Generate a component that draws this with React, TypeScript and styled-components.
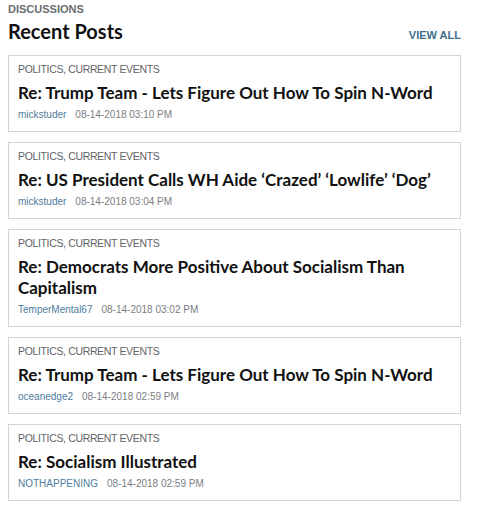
import React from "react";
import styled, { createGlobalStyle } from "styled-components";

const Global = createGlobalStyle`
  html, body { margin: 0; padding: 0; background: #fff; }
  body { font-family: Lato, "Liberation Sans", Arial, sans-serif; color: #111; }
`;

const Page = styled.div`
  width: 480px;
  padding: 2px 19px 0 8px;
  box-sizing: border-box;
`;

const Eyebrow = styled.div`
  font-family: "Liberation Sans", Arial, sans-serif;
  font-size: 11px;
  font-weight: 700;
  color: #6a6e72;
  line-height: 14px;
`;

const HeaderRow = styled.div`
  display: flex;
  align-items: baseline;
  justify-content: space-between;
  margin-top: 3px;
  margin-bottom: 12px;
`;

const Heading = styled.h2`
  margin: 0;
  font-size: 20px;
  font-weight: 700;
  line-height: 24px;
  color: #111;
`;

const ViewAll = styled.a`
  font-family: "Liberation Sans", Arial, sans-serif;
  font-size: 11px;
  font-weight: 700;
  color: #3d6f8c;
  text-decoration: none;
`;

const List = styled.div`
  display: flex;
  flex-direction: column;
  gap: 10px;
`;

const Card = styled.div`
  border: 1px solid #d4d4d4;
  padding: 6px 9px 9px;
  display: flex;
  flex-direction: column;
`;

const Category = styled.div`
  font-family: "Liberation Sans", Arial, sans-serif;
  font-size: 10.5px;
  color: #5f6368;
  line-height: 14px;
  letter-spacing: -0.35px;
`;

const Title = styled.div`
  font-size: 17px;
  font-weight: 700;
  line-height: 21px;
  color: #111;
  margin-top: 6px;
`;

const Meta = styled.div`
  display: flex;
  gap: 9px;
  font-family: "Liberation Sans", Arial, sans-serif;
  font-size: 10px;
  line-height: 14px;
  margin-top: 5px;
`;

const Author = styled.span`
  color: #4f7c9c;
`;

const Stamp = styled.span`
  color: #7a7e82;
`;

const posts = [
  { title: "Re: Trump Team - Lets Figure Out How To Spin N-Word", author: "mickstuder", date: "08-14-2018 03:10 PM" },
  { title: "Re: US President Calls WH Aide \u2018Crazed\u2019 \u2018Lowlife\u2019 \u2018Dog\u2019", author: "mickstuder", date: "08-14-2018 03:04 PM" },
  { title: "Re: Democrats More Positive About Socialism Than Capitalism", author: "TemperMental67", date: "08-14-2018 03:02 PM" },
  { title: "Re: Trump Team - Lets Figure Out How To Spin N-Word", author: "oceanedge2", date: "08-14-2018 02:59 PM" },
  { title: "Re: Socialism Illustrated", author: "NOTHAPPENING", date: "08-14-2018 02:59 PM" },
];

export default function App() {
  return (
    <Page>
      <Global />
      <Eyebrow>DISCUSSIONS</Eyebrow>
      <HeaderRow>
        <Heading>Recent Posts</Heading>
        <ViewAll href="#">VIEW ALL</ViewAll>
      </HeaderRow>
      <List>
        {posts.map((p, i) => (
          <Card key={i}>
            <Category>POLITICS, CURRENT EVENTS</Category>
            <Title>{p.title}</Title>
            <Meta>
              <Author>{p.author}</Author>
              <Stamp>{p.date}</Stamp>
            </Meta>
          </Card>
        ))}
      </List>
    </Page>
  );
}
